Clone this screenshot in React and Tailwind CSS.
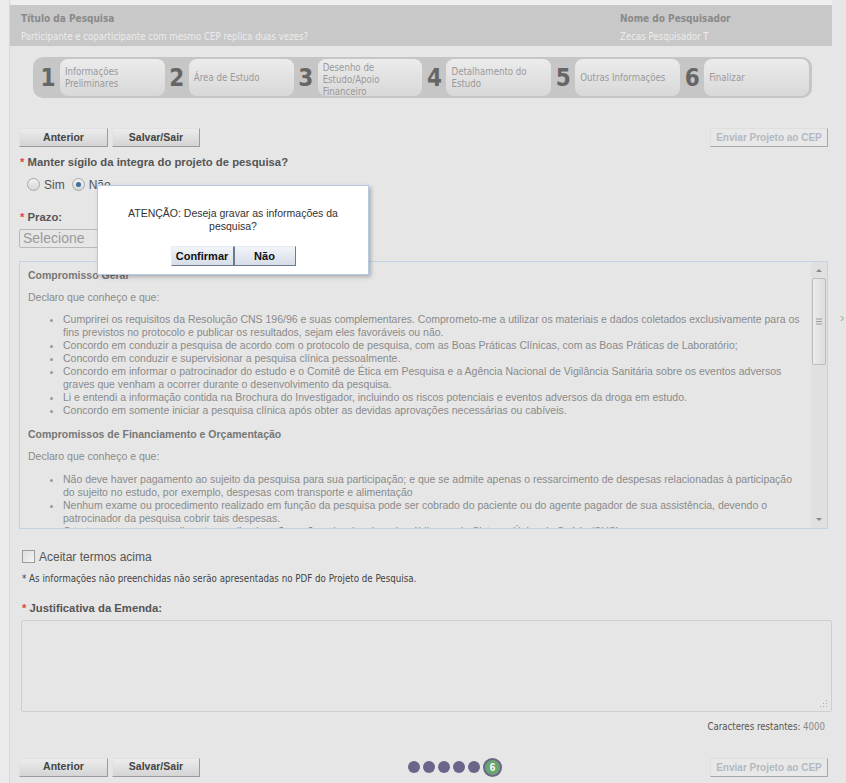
import React from 'react';

const NARROW = "font-['Liberation_Sans_Narrow','DejaVu_Sans_Condensed','Roboto_Condensed',Roboto,sans-serif]";

const STEPS = [
  { n: 1, label: 'Informações Preliminares' },
  { n: 2, label: 'Área de Estudo' },
  { n: 3, label: 'Desenho de Estudo/Apoio Financeiro' },
  { n: 4, label: 'Detalhamento do Estudo' },
  { n: 5, label: 'Outras Informações' },
  { n: 6, label: 'Finalizar' },
];

const GERAL = [
  'Cumprirei os requisitos da Resolução CNS 196/96 e suas complementares. Comprometo-me a utilizar os materiais e dados coletados exclusivamente para os fins previstos no protocolo e publicar os resultados, sejam eles favoráveis ou não.',
  'Concordo em conduzir a pesquisa de acordo com o protocolo de pesquisa, com as Boas Práticas Clínicas, com as Boas Práticas de Laboratório;',
  'Concordo em conduzir e supervisionar a pesquisa clínica pessoalmente.',
  'Concordo em informar o patrocinador do estudo e o Comitê de Ética em Pesquisa e a Agência Nacional de Vigilância Sanitária sobre os eventos adversos graves que venham a ocorrer durante o desenvolvimento da pesquisa.',
  'Li e entendi a informação contida na Brochura do Investigador, incluindo os riscos potenciais e eventos adversos da droga em estudo.',
  'Concordo em somente iniciar a pesquisa clínica após obter as devidas aprovações necessárias ou cabíveis.',
];

const FINANC = [
  'Não deve haver pagamento ao sujeito da pesquisa para sua participação; e que se admite apenas o ressarcimento de despesas relacionadas à participação do sujeito no estudo, por exemplo, despesas com transporte e alimentação',
  'Nenhum exame ou procedimento realizado em função da pesquisa pode ser cobrado do paciente ou do agente pagador de sua assistência, devendo o patrocinador da pesquisa cobrir tais despesas.',
  'O tratamento e os procedimentos realizados não serão cobrados da rede pública ou do Sistema Único de Saúde (SUS).',
];

function GreyButton({ children, w }) {
  return (
    <button
      type="button"
      className={`${w} h-[19px] whitespace-nowrap border border-t-[#e2e2e2] border-l-[#e2e2e2] border-r-[#9b9b9b] border-b-[#9b9b9b] bg-gradient-to-b from-[#ececec] to-[#d4d4d4] text-[10.5px] font-bold text-[#444]`}
    >
      {children}
    </button>
  );
}

function SendButton() {
  return (
    <button
      type="button"
      className="h-[19px] w-[118px] whitespace-nowrap border border-t-[#dedede] border-l-[#dedede] border-r-[#a3a8ae] border-b-[#a3a8ae] bg-[#e8e8e8] text-[10px] font-bold text-[#b3b9c2]"
    >
      Enviar Projeto ao CEP
    </button>
  );
}

function ButtonRow({ middle }) {
  return (
    <div className="flex items-center">
      <div className="flex gap-[4px]">
        <GreyButton w="w-[89px]">Anterior</GreyButton>
        <GreyButton w="w-[88px]">Salvar/Sair</GreyButton>
      </div>
      <div className="flex flex-1 justify-center">{middle}</div>
      <SendButton />
    </div>
  );
}

function Label({ children }) {
  return (
    <p className="text-[11.3px] font-bold text-[#555]">
      <span className="text-[#d44]">* </span>
      {children}
    </p>
  );
}

function Radio({ checked }) {
  return (
    <span className="flex h-[13px] w-[13px] items-center justify-center rounded-full border border-[#a8a8a8] bg-gradient-to-b from-[#f2f2f2] to-[#d6d6d6]">
      {checked && <span className="h-[5px] w-[5px] rounded-full bg-[#3f6f9e]" />}
    </span>
  );
}

export default function App() {
  return (
    <div className="relative flex min-h-[783px] w-[846px] bg-[#e6e6e6] font-['Liberation_Sans',Arial,sans-serif]">
      <div className="w-[10px] shrink-0 border-r border-[#d8d8d8] bg-[#ebebeb]" />

      <div className="w-[822px] shrink-0">
        <div className="h-[5px] bg-[#eeeeee]" />
        <div className={`grid h-[41px] grid-cols-[1fr_201px] bg-[#c8c8c8] px-[11px] pt-[5px] ${NARROW} leading-[18px]`}>
          <div>
            <p className="text-[10px] font-bold text-[#8a8a8a]">Título da Pesquisa</p>
            <p className="text-[9.6px] text-[#ececec]">Participante e coparticipante com mesmo CEP replica duas vezes?</p>
          </div>
          <div>
            <p className="text-[10px] font-bold text-[#8a8a8a]">Nome do Pesquisador</p>
            <p className="text-[9.6px] text-[#ececec]">Zecas Pesquisador T</p>
          </div>
        </div>

        <div className="ml-[23px] mt-[11px] flex h-[41px] w-[779px] rounded-[10px] bg-[#c6c6c6] px-[3px] py-[2px]">
          {STEPS.map((s) => (
            <div key={s.n} className="flex flex-1">
              <div className={`flex w-[24px] shrink-0 items-center justify-center ${NARROW} text-[24px] font-bold text-[#666]`}>
                {s.n}
              </div>
              <div className={`flex flex-1 items-center overflow-visible rounded-[8px] bg-gradient-to-b from-[#ececec] to-[#d8d8d8] pl-[5px] pr-[2px] ${NARROW} text-[9.6px] leading-[12px] text-[#9a9a9a]`}>
                <span className={s.n === 3 ? 'mt-[4px] w-[62px]' : s.n === 5 ? '' : 'w-[80px]'}>{s.label}</span>
              </div>
            </div>
          ))}
        </div>

        <div className="pl-[9px] pr-[4px]">
          <div className="mt-[30px]">
            <ButtonRow />
          </div>

          <div className="mt-[7px] pl-[1px]">
            <Label>Manter sígilo da integra do projeto de pesquisa?</Label>
          </div>
          <div className="mt-[5px] flex items-center gap-[4px] pl-[8px] text-[12px] text-[#555]">
            <Radio />
            <span className="mr-[3px]">Sim</span>
            <Radio checked />
            <span>Não</span>
          </div>

          <div className="mt-[15px] pl-[1px]">
            <Label>Prazo:</Label>
          </div>
          <div className="mt-[3px] flex h-[19px] w-[200px] items-center rounded-[2px] border border-[#b9b9b9] bg-[#e6e6e6] px-[3px] text-[14px] text-[#9a9a9a]">
            Selecione
          </div>

          <div className="mt-[13px] flex h-[268px] border border-[#c4d3e4] bg-[#e6e6e6]">
            <div className="flex-1 overflow-hidden pl-[8px] pr-[10px] pt-[7px] text-[10.5px] leading-[13px] text-[#8a8a8a]">
              <p className="font-bold text-[#777]">Compromisso Geral</p>
              <p className="mt-[9px]">Declaro que conheço e que:</p>
              <ul className="mt-[9px] list-disc pl-[35px] marker:text-[#999]">
                {GERAL.map((t) => (
                  <li key={t}>{t}</li>
                ))}
              </ul>
              <p className="mt-[11px] font-bold text-[#777]">Compromissos de Financiamento e Orçamentação</p>
              <p className="mt-[9px]">Declaro que conheço e que:</p>
              <ul className="mt-[10px] list-disc pl-[35px] marker:text-[#999]">
                {FINANC.map((t) => (
                  <li key={t}>{t}</li>
                ))}
              </ul>
            </div>
            <div className="flex w-[16px] shrink-0 flex-col items-center bg-[#e0e0e0]">
              <svg width="16" height="16" viewBox="0 0 16 16">
                <path d="M5 10 L8 7 L11 10 Z" fill="#8a8a8a" />
              </svg>
              <div className="flex h-[87px] w-[14px] items-center justify-center rounded-[2px] border border-[#bdbdbd] bg-gradient-to-r from-[#ececec] to-[#dcdcdc]">
                <svg width="8" height="7" viewBox="0 0 8 7">
                  <path d="M1 1 H7 M1 3.5 H7 M1 6 H7" stroke="#9a9a9a" strokeWidth="1" />
                </svg>
              </div>
              <div className="flex-1" />
              <svg width="16" height="16" viewBox="0 0 16 16">
                <path d="M5 6 L8 9 L11 6 Z" fill="#8a8a8a" />
              </svg>
            </div>
          </div>

          <label className="mt-[19px] flex items-center gap-[4px] pl-[3px] text-[12px] text-[#555]">
            <span className="h-[13px] w-[13px] border border-[#9c9c9c] bg-gradient-to-br from-[#dedede] to-[#f4f4f4]" />
            Aceitar termos acima
          </label>
          <p className={`mt-[6px] pl-[3px] ${NARROW} text-[9.7px] text-[#444]`}>
            * As informações não preenchidas não serão apresentadas no PDF do Projeto de Pesquisa.
          </p>

          <div className="mt-[14px] pl-[3px]">
            <Label>Justificativa da Emenda:</Label>
          </div>
          <div className="relative ml-[2px] mt-[3px] h-[92px] w-[811px] rounded-[2px] border border-[#cfcfcf] bg-[#e6e6e6]">
            <svg className="absolute bottom-[3px] right-[3px]" width="8" height="8" viewBox="0 0 8 8">
              <g fill="#aaa">
                <rect x="6" y="0" width="1" height="1" />
                <rect x="3" y="3" width="1" height="1" />
                <rect x="6" y="3" width="1" height="1" />
                <rect x="0" y="6" width="1" height="1" />
                <rect x="3" y="6" width="1" height="1" />
                <rect x="6" y="6" width="1" height="1" />
              </g>
            </svg>
          </div>
          <p className={`mt-[8px] pr-[3px] text-right ${NARROW} text-[9.6px] text-[#555]`}>
            Caracteres restantes: <span className="text-[#888]">4000</span>
          </p>

          <div className="mt-[23px]">
            <ButtonRow
              middle={
                <div className="flex items-center gap-[3px]">
                  {[1, 2, 3, 4, 5].map((d) => (
                    <span key={d} className="h-[12px] w-[12px] rounded-full bg-[#6c6589]" />
                  ))}
                  <span className="flex h-[19px] w-[19px] items-center justify-center rounded-full border-2 border-[#6c6589] bg-[#6aa46f] text-[10px] font-bold text-white">
                    6
                  </span>
                </div>
              }
            />
          </div>
        </div>
      </div>

      <div className="flex-1 pl-[8px] pt-[308px] text-[13px] text-[#aaa]">›</div>

      <div className="absolute left-[97px] top-[185px] flex h-[90px] w-[272px] flex-col items-center border border-[#b5cbe4] bg-white pt-[21px] shadow-[2px_2px_4px_rgba(0,0,0,0.25)]">
        <p className="w-[230px] text-center text-[10.5px] leading-[13px] text-[#333]">
          ATENÇÃO: Deseja gravar as informações da pesquisa?
        </p>
        <div className="mt-[13px] flex">
          <button
            type="button"
            className="h-[20px] w-[63px] border border-t-[#e6ebf2] border-l-[#e6ebf2] border-r-[#6c7b90] border-b-[#6c7b90] bg-gradient-to-b from-[#f2f5f9] to-[#d6dde7] text-[11px] font-bold text-[#111]"
          >
            Confirmar
          </button>
          <button
            type="button"
            className="h-[20px] w-[62px] border border-t-[#e6ebf2] border-l-[#6c7b90] border-r-[#6c7b90] border-b-[#6c7b90] bg-gradient-to-b from-[#f2f5f9] to-[#d6dde7] text-[11px] font-bold text-[#111]"
          >
            Não
          </button>
        </div>
      </div>
    </div>
  );
}
